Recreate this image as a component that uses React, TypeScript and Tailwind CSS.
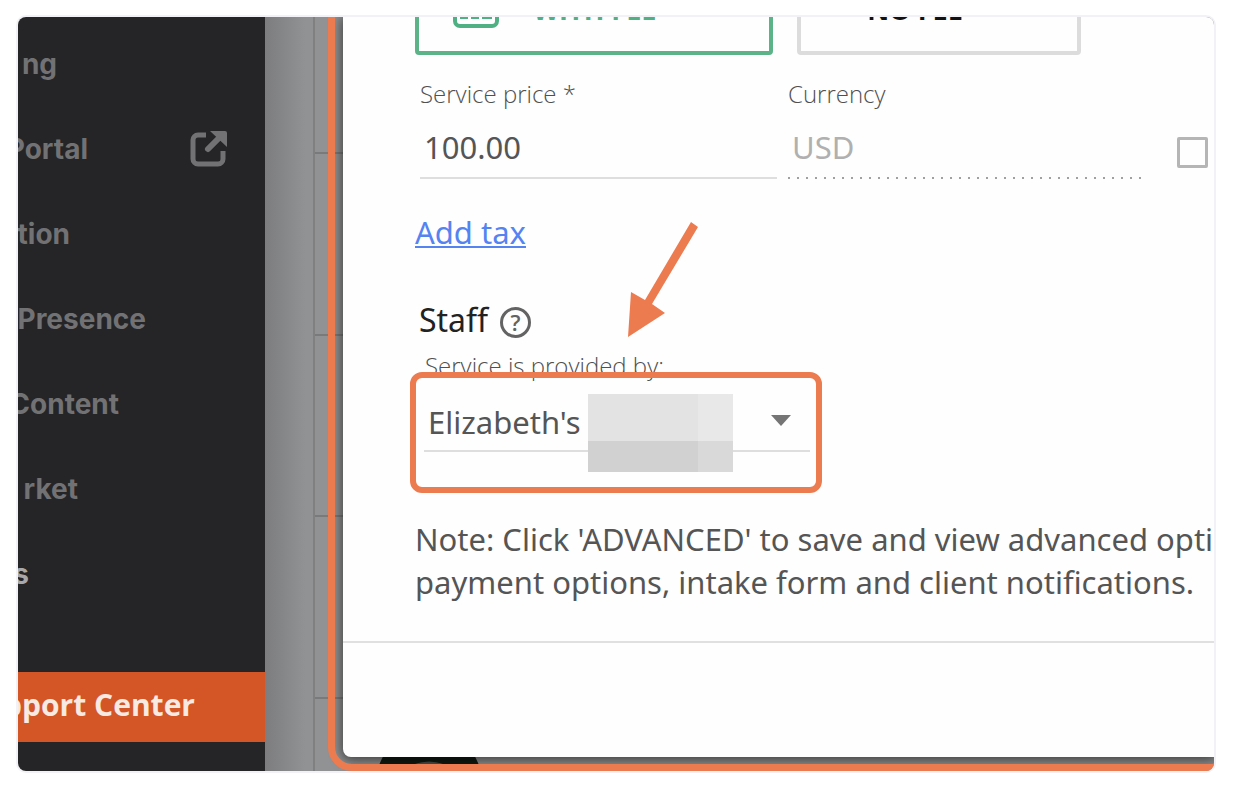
import React from "react";

interface NavItemProps {
    label: string;
    widthClass: string;
    active?: boolean;
    external?: boolean;
}

const NAV_ITEMS: NavItemProps[] = [
    { label: "ng", widthClass: "w-[39px]" },
    { label: "Portal", widthClass: "w-[70px]", external: true },
    { label: "tion", widthClass: "w-[52px]" },
    { label: "Presence", widthClass: "w-[128px]" },
    { label: "Content", widthClass: "w-[101px]" },
    { label: "rket", widthClass: "w-[60px]" },
    { label: "s", widthClass: "w-[11px]", active: true },
];

const ExternalIcon: React.FC = () => (
    <svg
        className="w-10 h-10"
        viewBox="0 0 40 40"
        fill="none"
        stroke="currentColor"
        aria-hidden="true"
    >
        <path
            d="M17 6H9a5 5 0 0 0-5 5v19a5 5 0 0 0 5 5h20a5 5 0 0 0 5-5v-8"
            strokeWidth="5"
        />
        <path d="M19 20L31 8" strokeWidth="6" strokeLinecap="round" />
        <path d="M21 2h15q2 0 2 2v14z" fill="currentColor" stroke="none" />
    </svg>
);

const NavItem: React.FC<NavItemProps> = ({
    label,
    widthClass,
    active,
    external,
}) => (
    <li>
        <a
            href="#"
            className={`flex h-[85px] items-center justify-between pr-9 text-[28px] leading-10 font-bold ${
                active ? "text-[#a8a8aa]" : "text-[#727274]"
            }`}
        >
            <span
                className={`flex shrink-0 justify-end overflow-hidden ${widthClass}`}
            >
                {label}
            </span>
            {external && <ExternalIcon />}
        </a>
    </li>
);

const Sidebar: React.FC = () => (
    <nav className="flex w-[247px] shrink-0 flex-col overflow-hidden bg-[#252527] pt-1 font-['Inter',sans-serif]">
        <ul>
            {NAV_ITEMS.map((item) => (
                <NavItem key={item.label} {...item} />
            ))}
        </ul>
        <a
            href="#"
            className="mt-14 flex h-[70px] items-center bg-[#d45526] pb-1.5 font-['Open_Sans',sans-serif] text-[30px] font-bold text-[#f8e9e3]"
        >
            <span className="flex w-[177px] justify-end overflow-hidden whitespace-nowrap">
                pport Center
            </span>
        </a>
    </nav>
);

const CalendarGrid: React.FC = () => (
    <div
        className="absolute inset-0 flex bg-linear-to-r from-[#7d7d7f] to-[#919293] to-[40px]"
        aria-hidden="true"
    >
        <div className="ml-12 w-full border-l-2 border-[#808081] pt-[135px]">
            <div className="h-[182px] border-t-2 border-[#7a7a7b]" />
            <div className="h-[181px] border-t-2 border-[#7a7a7b]" />
            <div className="h-[182px] border-t-2 border-[#7a7a7b]" />
            <div className="border-t-2 border-[#7a7a7b]" />
        </div>
        <svg
            className="absolute bottom-0 left-[111px] h-[42px] w-[106px]"
            viewBox="0 0 106 42"
        >
            <circle cx="53" cy="54" r="53" fill="#101a12" />
            <path d="M36 36q17-7 34 0" fill="#4a504b" />
        </svg>
    </div>
);

const CashIcon: React.FC = () => (
    <svg
        className="h-9 w-[46px]"
        viewBox="0 0 46 36"
        fill="none"
        stroke="currentColor"
        aria-hidden="true"
    >
        <rect x="2" y="2" width="42" height="32" rx="5" strokeWidth="4" />
        <path d="M7 26h8M18 26h8M29 26h10" strokeWidth="2" />
    </svg>
);

const PriceSection: React.FC = () => (
    <>
        <div className="-mt-12 flex gap-6 text-[27px] font-bold">
            <button
                type="button"
                className="flex h-[86px] w-[358px] items-center rounded-sm border-4 border-[#5cb388] pb-1 pl-[34px] text-[#4fb083]"
            >
                <CashIcon />
                <span className="ml-[34px] whitespace-nowrap">WITH FEE</span>
            </button>
            <button
                type="button"
                className="flex h-[86px] w-[284px] items-center justify-center rounded-sm border-4 border-[#dcdcdc] pb-1 pr-12 text-[#111111]"
            >
                NO FEE
            </button>
        </div>
        <div className="mt-[23px] flex items-end pl-[5px]">
            <div className="flex w-[357px] shrink-0 flex-col gap-2">
                <label
                    htmlFor="price"
                    className="text-2xl font-light text-[#505050]"
                >
                    Service price *
                </label>
                <input
                    id="price"
                    defaultValue="100.00"
                    className="h-[61px] w-full border-b-2 border-[#dedede] pb-[2px] pl-1 font-['Noto_Sans',sans-serif] text-[31px] outline-none"
                />
            </div>
            <div className="ml-[11px] flex w-[353px] shrink-0 flex-col gap-2">
                <label
                    htmlFor="currency"
                    className="text-2xl font-light text-[#505050]"
                >
                    Currency
                </label>
                <input
                    id="currency"
                    defaultValue="USD"
                    readOnly
                    className="h-[61px] w-full bg-[repeating-linear-gradient(90deg,#a0a0a0_0_2px,transparent_2px_9px)] bg-[length:100%_2px] bg-bottom bg-no-repeat pb-1 pl-1 font-['Noto_Sans',sans-serif] text-[31px] text-[#b0b0b0] outline-none"
                />
            </div>
            <input
                type="checkbox"
                aria-label="Hide price"
                className="mb-[11px] ml-9 h-[31px] w-[31px] shrink-0 appearance-none rounded-xs border-[3px] border-[#b5b5b5]"
            />
        </div>
    </>
);

const StaffSelect: React.FC = () => (
    <div className="ml-[9px] mt-[10px] w-[386px]">
        <label
            htmlFor="staff"
            className="block pl-px text-2xl font-light text-[#505050]"
        >
            Service is provided by:
        </label>
        <div className="relative mt-3">
            <select
                id="staff"
                className="block h-[58px] w-full appearance-none border-b-2 border-[#dedede] pl-1 font-['Noto_Sans',sans-serif] text-[31px] outline-none"
            >
                <option>Elizabeth's</option>
            </select>
            <svg
                className="pointer-events-none absolute right-[19px] top-[21px] h-[12px] w-[20px]"
                viewBox="0 0 20 12"
            >
                <path d="M0 0h20L10 11z" fill="#757575" />
            </svg>
            {/* hides the last name */}
            <div className="absolute left-[164px] top-0 grid h-[78px] w-[145px] grid-cols-[110px_1fr] grid-rows-[47px_1fr]">
                <div className="bg-[#e3e3e3]" />
                <div className="bg-[#e8e8e8]" />
                <div className="bg-[#d1d1d1]" />
                <div className="bg-[#d9d9d9]" />
            </div>
            <div className="pointer-events-none absolute -bottom-[41px] -left-[14px] -right-[12px] -top-[22px] rounded-xl border-6 border-[#ed7b50]" />
            <svg
                className="pointer-events-none absolute -top-[172px] left-[203px] h-[116px] w-[72px]"
                viewBox="0 0 72 116"
                fill="#ed7b50"
            >
                <path d="M1 115L4 70L18 78L64 0L71 5L25 82L38 91Z" />
            </svg>
        </div>
    </div>
);

const ServiceDialog: React.FC = () => (
    <div
        role="dialog"
        aria-label="Service"
        className="relative rounded-bl-lg bg-[#fefefe] text-[#555555] shadow-[0_2px_12px_2px_rgba(0,0,0,0.55)]"
    >
        <div className="flow-root overflow-hidden pb-[37px] pl-[72px]">
            <PriceSection />
            <a
                href="#"
                className="mt-[33px] inline-block font-['Noto_Sans',sans-serif] text-[31px] leading-10 text-[#5583f2] underline decoration-2 underline-offset-2"
            >
                Add tax
            </a>
            <div className="mt-12 flex items-center gap-3 pl-1">
                <h2 className="font-['Noto_Sans',sans-serif] text-[32px] leading-10 text-[#222222]">
                    Staff
                </h2>
                <button
                    type="button"
                    aria-label="Help"
                    className="mt-1 flex h-[31px] w-[31px] items-center justify-center rounded-full border-3 border-[#636363] text-[22px] leading-6 font-semibold text-[#636363]"
                >
                    ?
                </button>
            </div>
            <StaffSelect />
            <p className="mt-[66px] font-['Noto_Sans',sans-serif] text-[31px] leading-[43px] whitespace-nowrap">
                Note: Click 'ADVANCED' to save and view advanced options,
                <br />
                payment options, intake form and client notifications.
            </p>
        </div>
        <div className="h-[116px] border-t-2 border-[#e0e0e0]" />
    </div>
);

export default function App() {
    return (
        <div className="bg-white pb-5 pl-4 pr-6 pt-[15px] font-['Open_Sans',sans-serif]">
            <div className="flex overflow-hidden rounded-[10px] border-2 border-[#f2f1f5]">
                <Sidebar />
                <main className="relative min-w-0 flex-1 overflow-hidden pb-[14px] pl-[78px]">
                    <CalendarGrid />
                    <ServiceDialog />
                    <div className="pointer-events-none absolute -right-2 -top-8 bottom-0 left-[63px] rounded-bl-3xl border-7 border-[#ed7b50]" />
                </main>
            </div>
        </div>
    );
}
